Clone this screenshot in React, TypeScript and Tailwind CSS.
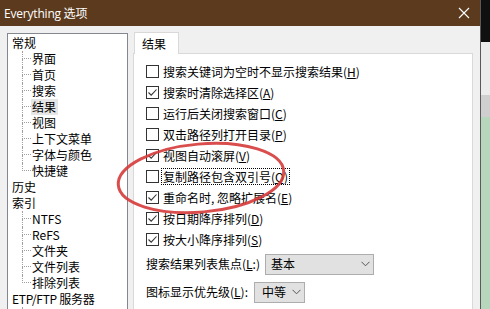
import React from "react";

const CJK = { fontFamily: '"Noto Sans CJK SC", "Noto Sans", sans-serif' };

function Mn({ pre, k, post }: { pre?: string; k: string; post?: string }) {
  return (
    <span>
      {pre}
      <span className="underline underline-offset-[1px]">{k}</span>
      {post}
    </span>
  );
}

function TreeChild({ label, last }: { label: string; last?: boolean }) {
  return (
    <div className="flex h-[16px] items-stretch">
      <div className="ml-[14px] flex w-[9px] flex-col">
        <div className="h-[8px] border-b border-l border-dotted border-[#a0a0a0]" />
        <div className={"h-[8px] " + (last ? "" : "border-l border-dotted border-[#a0a0a0]")} />
      </div>
      <div className="flex items-center pl-[1px]">{label}</div>
    </div>
  );
}

function TreeRoot({ label, latin }: { label: string; latin?: boolean }) {
  return (
    <div className={"flex h-[16px] items-center pl-[4px] " + (latin ? "tracking-[-0.3px]" : "")}>{label}</div>
  );
}

function Check({ checked }: { checked?: boolean }) {
  return (
    <div className="flex h-[13px] w-[13px] shrink-0 items-center justify-center border border-[#333] bg-white">
      {checked && (
        <svg width="11" height="11" viewBox="0 0 11 11">
          <path d="M1.5 5.5 L4.2 8.2 L9.5 2.5" fill="none" stroke="#333" strokeWidth="1.1" />
        </svg>
      )}
    </div>
  );
}

function CheckRow({
  checked,
  text,
  k,
  focus,
}: {
  checked?: boolean;
  text: string;
  k: string;
  focus?: boolean;
}) {
  return (
    <div className="flex h-[21px] items-center gap-[2px]">
      <Check checked={checked} />
      <div
        className={
          "flex h-[17px] items-center px-[1px] " +
          (focus ? "border border-dotted border-black" : "border border-transparent")
        }
      >
        <Mn pre={text + "("} k={k} post=")" />
      </div>
    </div>
  );
}

function Chevron() {
  return (
    <svg width="9" height="6" viewBox="0 0 9 6">
      <path d="M0.5 0.8 L4.5 4.8 L8.5 0.8" fill="none" stroke="#555" strokeWidth="1" />
    </svg>
  );
}

export default function App() {
  return (
    <div
      className="relative flex h-[309px] w-[490px] overflow-hidden bg-[#f0f0f0] text-[12px] leading-none text-black"
      style={CJK}
    >
      <div className="flex w-[480px] flex-col">
        {/* title bar */}
        <div className="flex h-[26px] w-[481px] shrink-0 items-center justify-between bg-[#5c3a1d] pl-[4px] pr-[11px] text-white">
          <span className="text-[12px]">
            <span style={{ fontFamily: '"Open Sans", sans-serif' }} className="tracking-[-0.2px]">
              Everything
            </span>{" "}
            选项
          </span>
          <svg width="12" height="12" viewBox="0 0 12 12">
            <path d="M1 1 L11 11 M11 1 L1 11" stroke="#fff" strokeWidth="1.1" />
          </svg>
        </div>

        {/* body */}
        <div className="flex flex-1 gap-[5px] pl-[7px] pt-[6px]">
          {/* tree */}
          <div className="mt-[1px] w-[121px] border border-b-0 border-[#828790] bg-white pt-[1px]">
            <TreeRoot label="常规" />
            <TreeChild label="界面" />
            <TreeChild label="首页" />
            <TreeChild label="搜索" />
            <div className="flex h-[16px] items-stretch">
              <div className="ml-[14px] flex w-[9px] flex-col">
                <div className="h-[8px] border-b border-l border-dotted border-[#a0a0a0]" />
                <div className="h-[8px] border-l border-dotted border-[#a0a0a0]" />
              </div>
              <div className="flex items-center bg-[#e6e6e6] pl-[1px] pr-[2px]">结果</div>
            </div>
            <TreeChild label="视图" />
            <TreeChild label="上下文菜单" />
            <TreeChild label="字体与颜色" />
            <TreeChild label="快捷键" last />
            <TreeRoot label="历史" />
            <TreeRoot label="索引" />
            <TreeChild label="NTFS" />
            <TreeChild label="ReFS" />
            <TreeChild label="文件夹" />
            <TreeChild label="文件列表" />
            <TreeChild label="排除列表" last />
            <TreeRoot label="ETP/FTP 服务器" latin />
            <TreeChild label="常规" last />
          </div>

          {/* right column */}
          <div className="flex w-[340px] flex-col">
            <div className="flex h-[21px] shrink-0">
              <div className="relative z-10 ml-[1px] flex h-[22px] w-[45px] items-center border border-b-0 border-[#d9d9d9] bg-white pl-[7px]">
                结果
              </div>
            </div>
            <div className="flex flex-1 flex-col border border-b-0 border-[#d9d9d9] bg-white pl-[12px] pt-[7px]">
              <CheckRow text="搜索关键词为空时不显示搜索结果" k="H" />
              <CheckRow checked text="搜索时清除选择区" k="A" />
              <CheckRow text="运行后关闭搜索窗口" k="C" />
              <CheckRow text="双击路径列打开目录" k="P" />
              <CheckRow checked text="视图自动滚屏" k="V" />
              <CheckRow text="复制路径包含双引号" k="Q" focus />
              <CheckRow checked text="重命名时, 忽略扩展名" k="E" />
              <CheckRow checked text="按日期降序排列" k="D" />
              <CheckRow checked text="按大小降序排列" k="S" />

              <div className="mt-[3px] flex h-[22px] items-center">
                <span className="w-[119px]">
                  <Mn pre="搜索结果列表焦点(" k="L" post=":)" />
                </span>
                <div className="flex h-[21px] w-[109px] items-center justify-between border border-[#adadad] bg-[#e1e1e1] pl-[5px] pr-[3px]">
                  <span>基本</span>
                  <Chevron />
                </div>
              </div>
              <div className="mt-[6px] flex h-[22px] items-center">
                <span className="w-[108px]">
                  <Mn pre="图标显示优先级(" k="L" post="):" />
                </span>
                <div className="flex h-[21px] w-[51px] items-center justify-between border border-[#adadad] bg-[#e1e1e1] pl-[7px] pr-[3px]">
                  <span>中等</span>
                  <Chevron />
                </div>
              </div>
              <div className="mt-[6px] flex h-[22px] items-center">
                <span className="w-[108px]" />
                <div className="h-[21px] w-[51px] border border-[#adadad] bg-[#e1e1e1]" />
              </div>
            </div>
          </div>
        </div>
      </div>

      {/* right edge: window border + background desktop strip */}
      <div className="flex w-[10px] flex-col border-l border-[#5a5a5a]">
        <div className="h-[42px] bg-[#101010]" />
        <div className="h-[53px] bg-[#ececec]" />
        <div className="h-[22px] bg-[#cfcfcf]" />
        <div className="flex-1 bg-[#b7d7bc]" />
      </div>

      {/* red hand-drawn annotation */}
      <svg
        className="pointer-events-none absolute left-0 top-0"
        width="490"
        height="309"
        viewBox="0 0 490 309"
      >
        <ellipse
          cx="201"
          cy="178"
          rx="83"
          ry="34"
          transform="rotate(-5 201 178)"
          fill="none"
          stroke="#d63a3a"
          strokeWidth="3"
          opacity="0.9"
        />
      </svg>
    </div>
  );
}
